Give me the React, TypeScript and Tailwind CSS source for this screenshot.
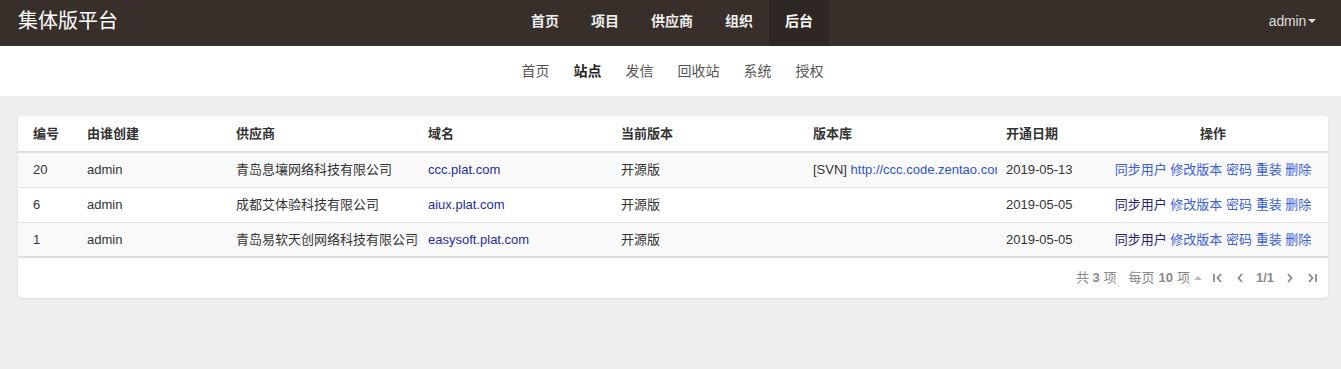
const FONT = { fontFamily: '"Liberation Sans", "Noto Sans CJK SC", sans-serif' };

const rows = [
  {
    id: "20",
    creator: "admin",
    vendor: "青岛息壤网络科技有限公司",
    domain: "ccc.plat.com",
    version: "开源版",
    repo: "http://ccc.code.zentao.com",
    date: "2019-05-13",
    visited: false,
  },
  {
    id: "6",
    creator: "admin",
    vendor: "成都艾体验科技有限公司",
    domain: "aiux.plat.com",
    version: "开源版",
    repo: "",
    date: "2019-05-05",
    visited: true,
  },
  {
    id: "1",
    creator: "admin",
    vendor: "青岛易软天创网络科技有限公司",
    domain: "easysoft.plat.com",
    version: "开源版",
    repo: "",
    date: "2019-05-05",
    visited: true,
  },
];

function Chevron({ dir, bar }: { dir: "left" | "right"; bar?: boolean }) {
  return (
    <svg width="12" height="12" viewBox="0 0 12 12" fill="none" stroke="#8a8a8a" strokeWidth="1.8">
      {dir === "left" ? (
        <>
          {bar && <path d="M2 2v8" />}
          <path d={bar ? "M9 2L5.5 6L9 10" : "M8 2L4.5 6L8 10"} />
        </>
      ) : (
        <>
          <path d={bar ? "M3 2L6.5 6L3 10" : "M4 2L7.5 6L4 10"} />
          {bar && <path d="M10 2v8" />}
        </>
      )}
    </svg>
  );
}

export default function App() {
  return (
    <div className="min-h-screen bg-[#efefef] text-[13px] text-[#333]" style={FONT}>
      <header className="flex h-[46px] items-center bg-[#382f2b] pl-[18px] pr-[25px]">
        <div className="w-[300px] pb-[5px] text-[20px] leading-none text-white">集体版平台</div>
        <nav className="flex flex-1 justify-center self-stretch pl-[10px]">
          {["首页", "项目", "供应商", "组织", "后台"].map((item) => (
            <a
              key={item}
              href="#"
              className={
                "flex items-center px-4 pb-[4px] text-[14px] font-bold " +
                (item === "后台" ? "bg-[#2e2724] text-white" : "text-[#eeeeee]")
              }
            >
              {item}
            </a>
          ))}
        </nav>
        <div className="flex w-[300px] items-center justify-end pb-[4px] text-[14px] text-[#dddddd]">
          <span className="tracking-[-0.2px]">admin</span>
          <span className="ml-[2px] h-0 w-0 border-x-[4px] border-t-[4px] border-x-transparent border-t-[#dddddd]" />
        </div>
      </header>

      <div className="flex h-[50px] items-center justify-center bg-white pl-[4px]">
        {["首页", "站点", "发信", "回收站", "系统", "授权"].map((item) => (
          <a
            key={item}
            href="#"
            className={
              "px-3 text-[14px] " + (item === "站点" ? "font-bold text-[#222]" : "text-[#555]")
            }
          >
            {item}
          </a>
        ))}
      </div>

      <div className="pl-[18px] pr-[13px] pt-[20px]">
        <div className="overflow-hidden rounded-[4px] bg-white shadow-[0_1px_3px_rgba(0,0,0,0.1)]">
          <table className="w-full table-fixed border-collapse">
            <colgroup>
              <col className="w-[54px]" />
              <col className="w-[149px]" />
              <col className="w-[192px]" />
              <col className="w-[193px]" />
              <col className="w-[192px]" />
              <col className="w-[193px]" />
              <col className="w-[107px]" />
              <col className="w-[230px]" />
            </colgroup>
            <thead>
              <tr className="h-[36px] border-b-2 border-[#dddddd] text-left font-bold text-[#333]">
                <th className="pl-[15px]">编号</th>
                <th className="pl-[15px]">由谁创建</th>
                <th className="pl-[15px]">供应商</th>
                <th className="pl-[15px]">域名</th>
                <th className="pl-[15px]">当前版本</th>
                <th className="pl-[15px]">版本库</th>
                <th className="pl-[15px]">开通日期</th>
                <th className="text-center">操作</th>
              </tr>
            </thead>
            <tbody>
              {rows.map((r, i) => (
                <tr
                  key={r.id}
                  className={
                    "h-[35px] border-b border-[#e5e5e5] last:border-b-2 last:border-[#dddddd] " +
                    (i % 2 === 0 ? "bg-[#f9f9f9]" : "bg-white")
                  }
                >
                  <td className="pl-[15px]">{r.id}</td>
                  <td className="pl-[15px]">{r.creator}</td>
                  <td className="whitespace-nowrap pl-[15px]">{r.vendor}</td>
                  <td className="pl-[15px]">
                    <a href="#" className="text-[#1d2f9c]">
                      {r.domain}
                    </a>
                  </td>
                  <td className="pl-[15px]">{r.version}</td>
                  <td className="pl-[15px] pr-0">
                    {r.repo && (
                      <div className="w-[184px] overflow-hidden whitespace-nowrap">
                        [SVN]{" "}
                        <a href="#" className="text-[#2f55c9]">
                          {r.repo}
                        </a>
                      </div>
                    )}
                  </td>
                  <td className="pl-[15px]">{r.date}</td>
                  <td className="whitespace-nowrap text-center">
                    <a href="#" className={r.visited ? "text-[#2b1f73]" : "text-[#3a5fd6]"}>
                      同步用户
                    </a>{" "}
                    <a href="#" className="text-[#3a5fd6]">修改版本</a>{" "}
                    <a href="#" className="text-[#3a5fd6]">密码</a>{" "}
                    <a href="#" className="text-[#3a5fd6]">重装</a>{" "}
                    <a href="#" className="text-[#3a5fd6]">删除</a>
                  </td>
                </tr>
              ))}
            </tbody>
          </table>
          <div className="flex h-[40px] items-center justify-end pr-[10px] text-[13px] text-[#888]">
            <span>
              共 <b>3</b> 项
            </span>
            <span className="ml-[12px] flex items-center">
              每页 <b className="mx-[4px]">10</b> 项
              <span className="ml-[4px] h-0 w-0 border-x-[4px] border-b-[4px] border-x-transparent border-b-[#bbbbbb]" />
            </span>
            <span className="ml-[10px] flex items-center gap-[10px]">
              <Chevron dir="left" bar />
              <Chevron dir="left" />
              <b className="text-[#888]">1/1</b>
              <Chevron dir="right" />
              <Chevron dir="right" bar />
            </span>
          </div>
        </div>
      </div>
    </div>
  );
}
